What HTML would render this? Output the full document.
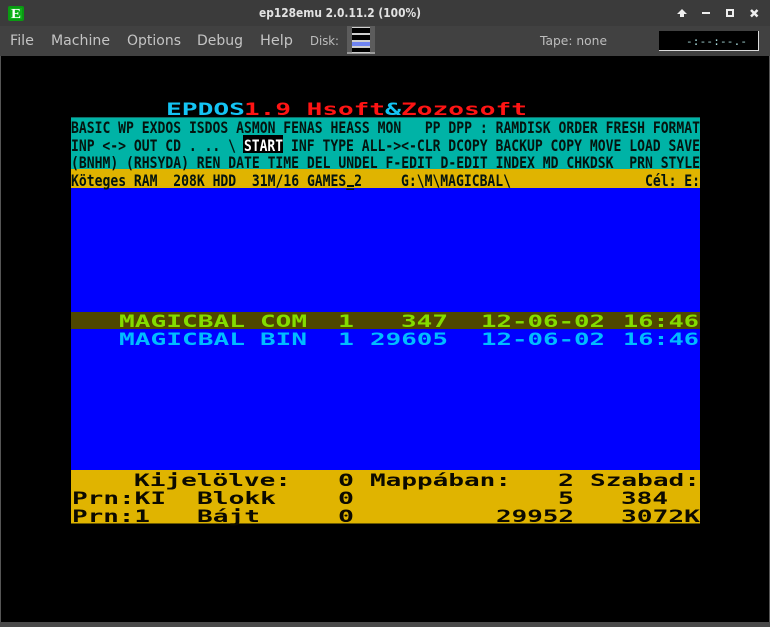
<!DOCTYPE html>
<html><head><meta charset="utf-8"><style>
html,body{margin:0;padding:0;background:#000;width:770px;height:627px;overflow:hidden}
svg{display:block}
.m{font-family:"DejaVu Sans",sans-serif;font-size:14px;fill:#c4c4c4}
.s{font-family:"DejaVu Sans",sans-serif;font-size:12px;fill:#bdbdbd}
.t{font-family:"DejaVu Sans",sans-serif;font-size:12px;font-weight:bold;fill:#e2e2e2}
.a{font-family:"DejaVu Sans Mono",monospace;font-weight:bold;font-size:16px;fill:#04140f;white-space:pre}
.b{font-family:"DejaVu Sans Mono",monospace;font-weight:bold;font-size:17px;white-space:pre}
</style></head><body>
<svg width="770" height="627" viewBox="0 0 770 627" xmlns="http://www.w3.org/2000/svg">
<rect width="770" height="627" fill="#000"/>
<rect width="770" height="26" fill="#3b3b3b"/>
<rect y="26" width="770" height="30" fill="#414141"/>
<rect y="56" width="1" height="571" fill="#555"/>
<rect x="769" y="56" width="1" height="571" fill="#555"/>
<rect y="622" width="770" height="5" fill="#4a4a4a"/>

<rect x="8" y="6" width="16" height="15" rx="2" fill="#0a9a12"/>
<rect x="10" y="8" width="12" height="11" fill="#0fb01a"/>
<text x="11" y="18" font-family="Liberation Serif,serif" font-weight="bold" font-size="14" fill="#fff" textLength="10" lengthAdjust="spacingAndGlyphs">E</text>
<text x="259" y="17" class="t" textLength="162" lengthAdjust="spacingAndGlyphs">ep128emu 2.0.11.2 (100%)</text>

<path d="M682 9l5 5h-3v3h-4v-3h-3z" fill="#eee"/>
<rect x="702" y="12" width="8" height="2" fill="#eee"/>
<rect x="727" y="10" width="6" height="6" fill="none" stroke="#eee" stroke-width="2"/>
<path d="M751 10l6.500 6.500M757.500 10l-6.500 6.500" stroke="#eee" stroke-width="2.500" fill="none"/>

<text x="10" y="45" class="m" textLength="24" lengthAdjust="spacingAndGlyphs">File</text>
<text x="51" y="45" class="m" textLength="59" lengthAdjust="spacingAndGlyphs">Machine</text>
<text x="127" y="45" class="m" textLength="54" lengthAdjust="spacingAndGlyphs">Options</text>
<text x="197" y="45" class="m" textLength="46" lengthAdjust="spacingAndGlyphs">Debug</text>
<text x="260" y="45" class="m" textLength="33" lengthAdjust="spacingAndGlyphs">Help</text>
<text x="310" y="45" class="s" textLength="29" lengthAdjust="spacingAndGlyphs">Disk:</text>
<text x="540" y="45" class="s" textLength="67" lengthAdjust="spacingAndGlyphs">Tape: none</text>

<rect x="347" y="26" width="28" height="28" fill="#5c5c5c"/>
<rect x="347" y="52" width="28" height="2" fill="#9a9a9a"/>
<rect x="352" y="27" width="18" height="26" fill="#cfcfcf"/>
<rect x="352" y="28" width="18" height="5" fill="#000"/>
<rect x="352" y="35" width="18" height="5" fill="#000"/>
<rect x="352" y="42" width="18" height="4" fill="#6f84f2"/>
<rect x="352" y="48" width="18" height="4" fill="#000"/>

<rect x="659" y="31" width="100" height="20" fill="#000"/>
<rect x="659" y="50" width="100" height="1" fill="#ddd"/>
<rect x="758" y="31" width="1" height="20" fill="#ddd"/>
<text x="686" y="45" font-family="DejaVu Sans Mono,monospace" font-size="11" fill="#a8dcdc" textLength="61" lengthAdjust="spacing">-:--:--.-</text>

<rect x="71" y="117" width="629" height="52" fill="#00b3a6"/>
<rect x="71" y="169" width="629" height="19" fill="#e0b400"/>
<rect x="71" y="188" width="629" height="282" fill="#0000ff"/>
<rect x="71" y="312" width="629" height="17" fill="#4f4700"/>
<rect x="71" y="470" width="629" height="54" fill="#e0b400"/>
<rect x="71" y="523" width="629" height="1" fill="#6b5a00"/>
<rect x="71" y="117" width="629" height="1" fill="#0d6f68"/>
<rect x="243" y="135" width="40" height="18" fill="#000"/>

<text x="166" y="115" class="b" fill="#14c4f4" textLength="79" lengthAdjust="spacingAndGlyphs">EPDOS</text>
<text x="244" y="115" class="b" fill="#ff1414" textLength="141" lengthAdjust="spacingAndGlyphs">1.9 Hsoft</text>
<text x="385" y="115" class="b" fill="#14c4f4" textLength="16" lengthAdjust="spacingAndGlyphs">&amp;</text>
<text x="401" y="115" class="b" fill="#ff1414" textLength="126" lengthAdjust="spacingAndGlyphs">Zozosoft</text>

<text x="71" y="133" class="a" textLength="629" lengthAdjust="spacingAndGlyphs">BASIC WP EXDOS ISDOS ASMON FENAS HEASS MON   PP DPP : RAMDISK ORDER FRESH FORMAT</text>
<text x="71" y="151" class="a" textLength="165" lengthAdjust="spacingAndGlyphs">INP &lt;-&gt; OUT CD . .. \</text>
<text x="244" y="151" class="a" style="fill:#fff" textLength="39" lengthAdjust="spacingAndGlyphs">START</text>
<text x="291" y="151" class="a" textLength="409" lengthAdjust="spacingAndGlyphs">INF TYPE ALL-&gt;&lt;-CLR DCOPY BACKUP COPY MOVE LOAD SAVE</text>
<text x="71" y="168" class="a" textLength="629" lengthAdjust="spacingAndGlyphs">(BNHM) (RHSYDA) REN DATE TIME DEL UNDEL F-EDIT D-EDIT INDEX MD CHKDSK  PRN STYLE</text>
<text x="71" y="186" class="a" textLength="291" lengthAdjust="spacingAndGlyphs">Köteges RAM  208K HDD  31M/16 GAMES_2</text>
<rect x="347" y="185" width="7" height="2" fill="#04140f"/>
<text x="401" y="186" class="a" textLength="110" lengthAdjust="spacingAndGlyphs">G:\M\MAGICBAL\</text>
<text x="645" y="186" class="a" textLength="55" lengthAdjust="spacingAndGlyphs">Cél: E:</text>

<g fill="#84dc00">
<text x="119" y="327" class="b" textLength="126" lengthAdjust="spacingAndGlyphs">MAGICBAL</text>
<text x="260" y="327" class="b" textLength="47" lengthAdjust="spacingAndGlyphs">COM</text>
<text x="338" y="327" class="b" textLength="16" lengthAdjust="spacingAndGlyphs">1</text>
<text x="401" y="327" class="b" textLength="47" lengthAdjust="spacingAndGlyphs">347</text>
<text x="481" y="327" class="b" textLength="124" lengthAdjust="spacingAndGlyphs">12-06-02</text>
<text x="623" y="327" class="b" textLength="76" lengthAdjust="spacingAndGlyphs">16:46</text>
</g>
<g fill="#00bcff">
<text x="119" y="345" class="b" textLength="126" lengthAdjust="spacingAndGlyphs">MAGICBAL</text>
<text x="260" y="345" class="b" textLength="47" lengthAdjust="spacingAndGlyphs">BIN</text>
<text x="338" y="345" class="b" textLength="16" lengthAdjust="spacingAndGlyphs">1</text>
<text x="370" y="345" class="b" textLength="78" lengthAdjust="spacingAndGlyphs">29605</text>
<text x="481" y="345" class="b" textLength="124" lengthAdjust="spacingAndGlyphs">12-06-02</text>
<text x="623" y="345" class="b" textLength="76" lengthAdjust="spacingAndGlyphs">16:46</text>
</g>
<g fill="#0c0a00">
<text x="134" y="486" class="b" textLength="157" lengthAdjust="spacingAndGlyphs">Kijelölve:</text>
<text x="338" y="486" class="b" textLength="16" lengthAdjust="spacingAndGlyphs">0</text>
<text x="370" y="486" class="b" textLength="141" lengthAdjust="spacingAndGlyphs">Mappában:</text>
<text x="558" y="486" class="b" textLength="16" lengthAdjust="spacingAndGlyphs">2</text>
<text x="590" y="486" class="b" textLength="110" lengthAdjust="spacingAndGlyphs">Szabad:</text>
<text x="72" y="504" class="b" textLength="94" lengthAdjust="spacingAndGlyphs">Prn:KI</text>
<text x="197" y="504" class="b" textLength="79" lengthAdjust="spacingAndGlyphs">Blokk</text>
<text x="338" y="504" class="b" textLength="16" lengthAdjust="spacingAndGlyphs">0</text>
<text x="558" y="504" class="b" textLength="16" lengthAdjust="spacingAndGlyphs">5</text>
<text x="621" y="504" class="b" textLength="47" lengthAdjust="spacingAndGlyphs">384</text>
<text x="72" y="522" class="b" textLength="78" lengthAdjust="spacingAndGlyphs">Prn:1</text>
<text x="197" y="522" class="b" textLength="63" lengthAdjust="spacingAndGlyphs">Bájt</text>
<text x="338" y="522" class="b" textLength="16" lengthAdjust="spacingAndGlyphs">0</text>
<text x="496" y="522" class="b" textLength="78" lengthAdjust="spacingAndGlyphs">29952</text>
<text x="621" y="522" class="b" textLength="79" lengthAdjust="spacingAndGlyphs">3072K</text>
</g>
</svg>
</body></html>
